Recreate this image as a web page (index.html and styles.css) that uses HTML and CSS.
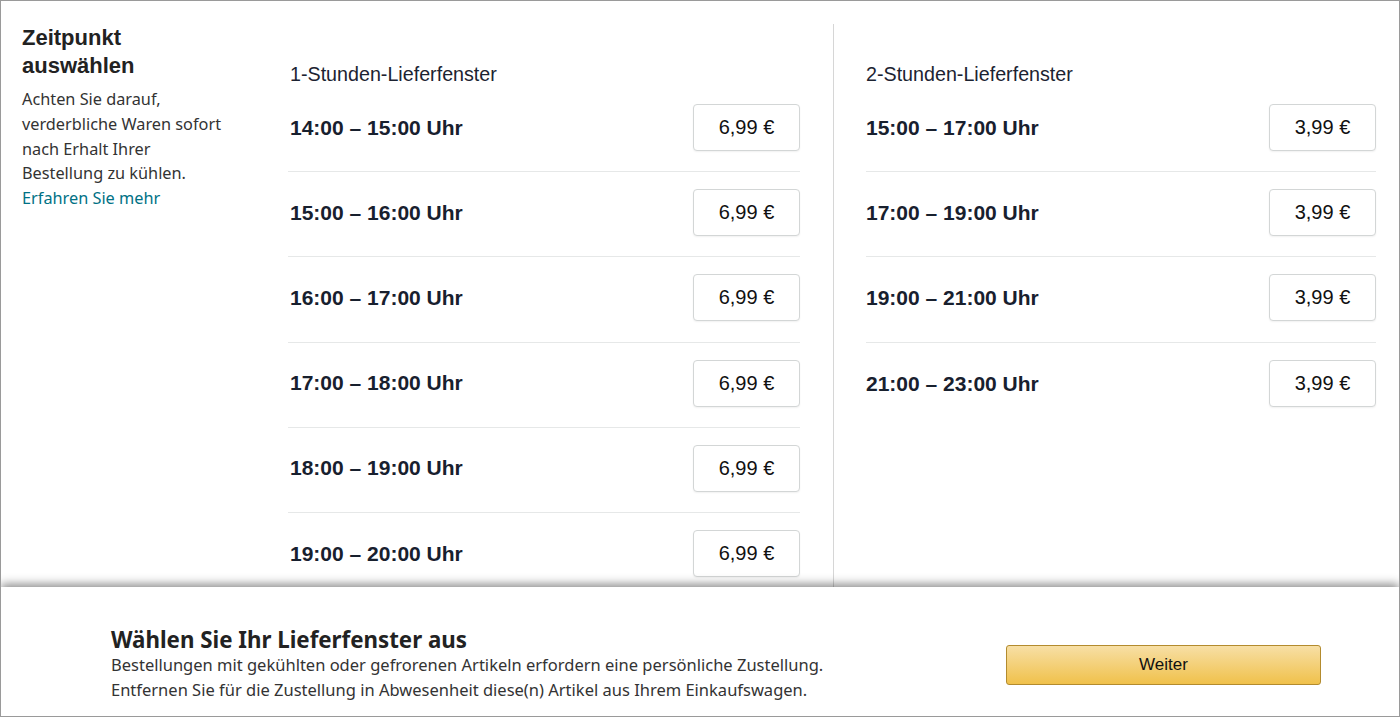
FILE: index.html
```html
<!DOCTYPE html>
<html lang="de">
<head>
<meta charset="utf-8">
<title>Zeitpunkt auswählen</title>
<link rel="stylesheet" href="styles.css">
</head>
<body>
<div class="frame">
  <div class="content">
    <aside class="intro">
      <h1 class="intro-title">Zeitpunkt<br>auswählen</h1>
      <p class="intro-text">Achten Sie darauf, verderbliche Waren sofort nach Erhalt Ihrer Bestellung zu kühlen.</p>
      <a class="intro-link" href="#">Erfahren Sie mehr</a>
    </aside>
    <section class="slots">
      <h2 class="slots-title">1-Stunden-Lieferfenster</h2>
      <div class="slot"><span class="slot-time">14:00 – 15:00 Uhr</span><button class="price">6,99 €</button></div>
      <div class="slot"><span class="slot-time">15:00 – 16:00 Uhr</span><button class="price">6,99 €</button></div>
      <div class="slot"><span class="slot-time">16:00 – 17:00 Uhr</span><button class="price">6,99 €</button></div>
      <div class="slot"><span class="slot-time">17:00 – 18:00 Uhr</span><button class="price">6,99 €</button></div>
      <div class="slot"><span class="slot-time">18:00 – 19:00 Uhr</span><button class="price">6,99 €</button></div>
      <div class="slot"><span class="slot-time">19:00 – 20:00 Uhr</span><button class="price">6,99 €</button></div>
    </section>
    <div class="divider"></div>
    <section class="slots slots-right">
      <h2 class="slots-title">2-Stunden-Lieferfenster</h2>
      <div class="slot"><span class="slot-time">15:00 – 17:00 Uhr</span><button class="price">3,99 €</button></div>
      <div class="slot"><span class="slot-time">17:00 – 19:00 Uhr</span><button class="price">3,99 €</button></div>
      <div class="slot"><span class="slot-time">19:00 – 21:00 Uhr</span><button class="price">3,99 €</button></div>
      <div class="slot slot-last"><span class="slot-time">21:00 – 23:00 Uhr</span><button class="price">3,99 €</button></div>
    </section>
  </div>
  <footer class="footer">
    <div class="footer-text">
      <h3 class="footer-title">Wählen Sie Ihr Lieferfenster aus</h3>
      <p class="footer-line">Bestellungen mit gekühlten oder gefrorenen Artikeln erfordern eine persönliche Zustellung.</p>
      <p class="footer-line">Entfernen Sie für die Zustellung in Abwesenheit diese(n) Artikel aus Ihrem Einkaufswagen.</p>
    </div>
    <button class="continue">Weiter</button>
  </footer>
</div>
</body>
</html>
```
FILE: styles.css
```css
* { box-sizing: border-box; }
html, body { margin: 0; padding: 0; background: #fff; }
body { font-family: "Liberation Sans", Arial, sans-serif; }

.frame {
  width: 1400px;
  height: 717px;
  border: 1px solid #9a9a9a;
  display: flex;
  flex-direction: column;
  overflow: hidden;
}

.content {
  flex: 1;
  min-height: 0;
  overflow: hidden;
  display: flex;
  padding: 23px 22px 0 21px;
}

.intro {
  width: 266px;
  flex: none;
}
.intro-title {
  margin: 0;
  font-family: "Liberation Sans", Arial, sans-serif;
  font-weight: bold;
  font-size: 22px;
  line-height: 28px;
  color: #222;
}
.intro-text {
  margin: 7px 0 0;
  max-width: 206px;
  font-family: "Noto Sans", sans-serif;
  font-size: 16.3px;
  line-height: 24.75px;
  color: #333;
}
.intro-link {
  display: block;
  font-family: "Noto Sans", sans-serif;
  font-size: 16.3px;
  line-height: 24.75px;
  color: #007185;
  text-decoration: none;
}

.slots {
  width: 512px;
  flex: none;
  padding-top: 38px;
}
.slots-right { width: 510px; }
.slots-title {
  margin: 0;
  padding-left: 2px;
  font-weight: normal;
  font-size: 19.7px;
  line-height: 25px;
  color: #1c2331;
}
.slots-right .slots-title,
.slots-right .slot { padding-left: 0; }
.slot {
  display: flex;
  align-items: center;
  justify-content: space-between;
  padding: 17px 0 20px 2px;
  border-bottom: 1px solid #e6e8e8;
  height: 85.2px;
}
.slot-last { border-bottom: none; }
.slot-time {
  font-weight: bold;
  font-size: 21px;
  color: #18202e;
}
.price {
  width: 107px;
  height: 47px;
  flex: none;
  border: 1px solid #d3d6d6;
  border-radius: 4px;
  background: #fff;
  box-shadow: 0 1px 2px rgba(0,0,0,0.06);
  font-family: "Liberation Sans", Arial, sans-serif;
  font-size: 20px;
  color: #111;
  padding: 0;
}

.divider {
  width: 1px;
  flex: none;
  background: #d6d6d6;
  margin: 0 32px 0 33px;
}

.footer {
  height: 129px;
  flex: none;
  display: flex;
  align-items: center;
  justify-content: space-between;
  padding: 41px 78px 14px 110px;
  background: #fff;
  box-shadow: 0 -3px 9px rgba(0,0,0,0.45);
  position: relative;
}
.footer-title {
  margin: 0;
  font-family: "Noto Sans", sans-serif;
  font-weight: bold;
  font-size: 22.3px;
  line-height: 24px;
  color: #222;
}
.footer-line {
  margin: 0;
  font-family: "Noto Sans", sans-serif;
  font-size: 16.5px;
  line-height: 25px;
  color: #333;
}
.continue {
  width: 315px;
  height: 40px;
  flex: none;
  border: 1px solid #b38b2e;
  border-radius: 3px;
  background: linear-gradient(#f7dfa5, #f0c14b);
  font-family: "Liberation Sans", Arial, sans-serif;
  font-size: 17px;
  color: #111;
  padding: 0;
}
```
